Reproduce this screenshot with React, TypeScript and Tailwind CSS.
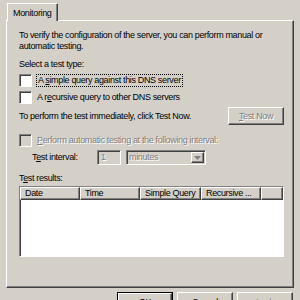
import React from "react";

const bevelOut = "border border-t-white border-l-white border-r-[#404040] border-b-[#404040] shadow-[inset_-1px_-1px_0_#808080]";
const sunken = "border border-t-[#808080] border-l-[#808080] border-r-white border-b-white shadow-[inset_1px_1px_0_#404040]";

function Check({ disabled }: { disabled?: boolean }) {
  return (
    <div className={`w-[13px] h-[13px] ${sunken} ${disabled ? "bg-[#d4d0c8]" : "bg-white"} shrink-0`} />
  );
}

function Disabled({ children }: { children: React.ReactNode }) {
  return <span className="text-[#808080] [text-shadow:1px_1px_0_#ffffff]">{children}</span>;
}

export default function App() {
  return (
    <div
      className="w-[300px] h-[300px] bg-[#d4d0c8] overflow-hidden text-[9px] leading-[11px] tracking-[-0.35px] text-black whitespace-nowrap"
      style={{ fontFamily: '"Liberation Sans", Arial, sans-serif' }}
    >
      <div className="pl-[7px] pt-[3px] flex">
        <div className="relative z-10 h-[18px] -mb-[1px] bg-[#d4d0c8] px-[5px] pt-[4px] border-l border-t border-l-white border-t-white border-r border-r-[#404040] shadow-[inset_-1px_0_0_#808080] rounded-tr-[1px]">
          Monitoring
        </div>
      </div>
      <div className={`ml-[6px] w-[288px] h-[268px] ${bevelOut} pl-[12px] pr-[9px] pt-[9px]`}>
        <div className="leading-[11px]">
          To verify the configuration of the server, you can perform manual or
          <br />
          automatic testing.
        </div>
        <div className="mt-[7px]">Select a test type:</div>
        <div className="mt-[4px] flex items-center gap-[4px]">
          <Check />
          <span className="border border-dotted border-black px-[1px]">
            A <u>s</u>imple query against this DNS server
          </span>
        </div>
        <div className="mt-[4px] flex items-center gap-[5px]">
          <Check />
          <span>
            A r<u>e</u>cursive query to other DNS servers
          </span>
        </div>
        <div className="mt-[3px] flex items-center justify-between">
          <span>To perform the test immediately, click Test Now.</span>
          <div className={`w-[56px] h-[18px] ${bevelOut} flex items-center justify-center`}>
            <Disabled>
              <u>T</u>est Now
            </Disabled>
          </div>
        </div>
        <div className="mt-[9px] flex items-center gap-[5px]">
          <Check disabled />
          <Disabled>
            <u>P</u>erform automatic testing at the following interval:
          </Disabled>
        </div>
        <div className="mt-[3px] flex items-center pl-[13px]">
          <span className="w-[65px]">
            T<u>e</u>st interval:
          </span>
          <div className={`w-[24px] h-[15px] ${sunken} flex items-center pl-[3px]`}>
            <Disabled>1</Disabled>
          </div>
          <div className={`ml-[5px] w-[80px] h-[15px] ${sunken} flex items-center justify-between pl-[2px] pr-[1px]`}>
            <Disabled>minutes</Disabled>
            <div className={`w-[13px] h-[11px] ${bevelOut} flex items-center justify-center`}>
              <svg width="7" height="4" viewBox="0 0 7 4">
                <path d="M0 0 H7 L3.5 4 Z" fill="#808080" />
              </svg>
            </div>
          </div>
        </div>
        <div className="mt-[8px]">
          T<u>e</u>st results:
        </div>
        <div className={`mt-[2px] w-[265px] h-[71px] ${sunken} bg-white flex flex-col`}>
          <div className="flex h-[13px] shrink-0">
            {[
              ["Date", "w-[60px]"],
              ["Time", "w-[60px]"],
              ["Simple Query", "w-[61px]"],
              ["Recursive ...", "w-[60px]"],
              ["", "flex-1"],
            ].map(([t, w], i) => (
              <div
                key={i}
                className={`${w} h-[13px] bg-[#d4d0c8] border-t border-l border-t-white border-l-white border-b border-r border-b-[#404040] border-r-[#404040] shadow-[inset_-1px_-1px_0_#808080] pl-[4px] leading-[11px] overflow-hidden`}
              >
                {t}
              </div>
            ))}
          </div>
        </div>
      </div>
      <div className="flex justify-end gap-[4px] pr-[7px] mt-[4px]">
        <div className="w-[56px] h-[20px] border border-black">
          <div className={`w-full h-full ${bevelOut} flex items-center justify-center`}>OK</div>
        </div>
        <div className={`w-[56px] h-[20px] ${bevelOut} flex items-center justify-center`}>Cancel</div>
        <div className={`w-[56px] h-[20px] ${bevelOut} flex items-center justify-center`}>
          <Disabled>
            <u>A</u>pply
          </Disabled>
        </div>
      </div>
    </div>
  );
}
